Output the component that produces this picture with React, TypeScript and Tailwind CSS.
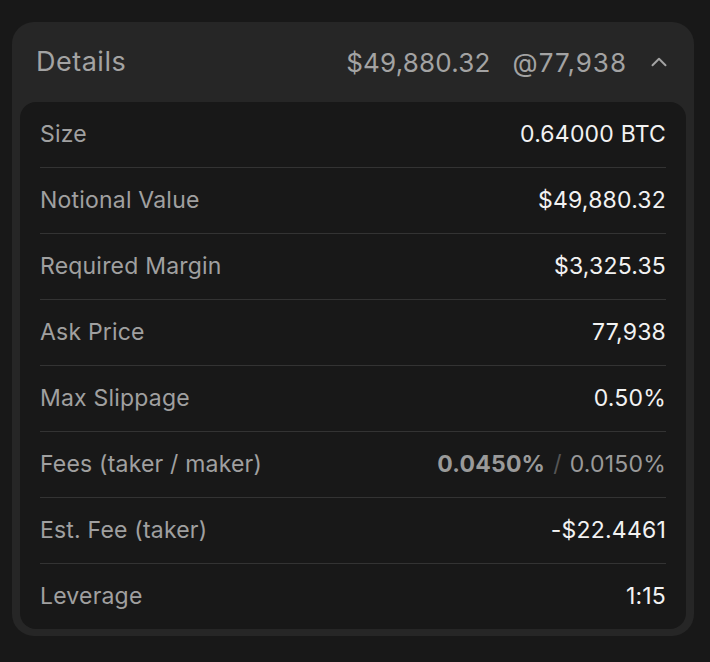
import { ChevronUp } from "lucide-react";

const rows = [
  { label: "Size", value: "0.64000 BTC" },
  { label: "Notional Value", value: "$49,880.32" },
  { label: "Required Margin", value: "$3,325.35" },
  { label: "Ask Price", value: "77,938" },
  { label: "Max Slippage", value: "0.50%" },
  { label: "Fees (taker / maker)", value: null },
  { label: "Est. Fee (taker)", value: "-$22.4461" },
  { label: "Leverage", value: "1:15" },
];

export default function App() {
  return (
    <div className="min-h-[662px] w-[710px] bg-[#181818] pt-[22px] px-[12px] font-['Inter',sans-serif]">
      <div className="w-[682px] rounded-[22px] bg-[#262626] px-[8px] pb-[7px]">
        <div className="flex h-[80px] items-center pl-[16px] pr-[14px] tracking-[0.2px]">
          <span className="flex-1 text-[27px] tracking-[0.5px] text-[#a3a3a3]">Details</span>
          <span className="text-[26px] text-[#a3a3a3]">$49,880.32</span>
          <span className="ml-[22px] text-[26px] tracking-[1px] text-[#a3a3a3]">@77,938</span>
          <ChevronUp className="ml-[19px] h-[26px] w-[26px] text-[#a3a3a3]" strokeWidth={1.8} />
        </div>
        <div className="rounded-[16px] bg-[#181818] px-[20px]">
          {rows.map((row, i) => (
            <div
              key={row.label}
              className={
                "flex items-center justify-between text-[23px] tracking-[0.2px] " +
                (i > 0 ? "h-[66px] border-t border-[#333333]" : "h-[65px]")
              }
            >
              <span className="text-[#a0a0a0]">{row.label}</span>
              {row.value ? (
                <span className="text-[#f2f2f2]">{row.value}</span>
              ) : (
                <span className="text-[#9a9a9a]">
                  <span className="font-bold">0.0450%</span>
                  <span className="mx-[8px] text-[#555555]">/</span>
                  <span>0.0150%</span>
                </span>
              )}
            </div>
          ))}
        </div>
      </div>
    </div>
  );
}
